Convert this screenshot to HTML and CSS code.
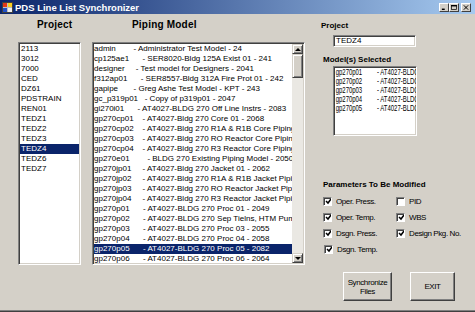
FILE: index.html
```html
<!DOCTYPE html>
<html lang="en">
<head>
    <meta charset="UTF-8">
    <title>PDS Line List Synchronizer</title>
    <link rel="stylesheet" href="styles.css">
</head>
<body>
    <div class="window">
        <header class="title-bar">
            <svg class="app-icon" width="11" height="11" viewBox="0 0 11 11">
                <rect x="0.5" y="0.5" width="10" height="10" fill="#c0c0c0" stroke="#404040"/>
                <rect x="1" y="1" width="4" height="4" fill="#e03818"/>
                <rect x="6" y="1" width="4" height="4" fill="#f8d020"/>
                <rect x="1" y="6" width="4" height="4" fill="#2050c8"/>
                <rect x="6" y="6" width="4" height="4" fill="#f0f0f0"/>
            </svg>
            <h1>PDS Line List Synchronizer</h1>
            <div class="win-btns">
                <span class="win-btn"><svg width="8" height="7" viewBox="0 0 8 7"><rect x="1" y="5" width="4" height="2" fill="#000"/></svg></span>
                <span class="win-btn"><svg width="8" height="7" viewBox="0 0 8 7"><rect x="0.5" y="0.5" width="7" height="6" fill="none" stroke="#000"/><rect x="0" y="0" width="8" height="2" fill="#000"/></svg></span>
                <span class="win-btn close"><svg width="8" height="7" viewBox="0 0 8 7"><path d="M1 0.5 L7 6.5 M7 0.5 L1 6.5" stroke="#000" stroke-width="1.4"/></svg></span>
            </div>
        </header>

        <main class="dialog">
            <section class="col col-project">
                <h2>Project</h2>
                <ul class="listbox project-list">
                    <li>2113</li>
                    <li>3012</li>
                    <li>7000</li>
                    <li>CED</li>
                    <li>DZ61</li>
                    <li>PDSTRAIN</li>
                    <li>REN01</li>
                    <li>TEDZ1</li>
                    <li>TEDZ2</li>
                    <li>TEDZ3</li>
                    <li class="selected">TEDZ4</li>
                    <li>TEDZ6</li>
                    <li>TEDZ7</li>
                </ul>
            </section>

            <section class="col col-model">
                <h2>Piping Model</h2>
                <div class="listbox model-box">
                    <ul class="rows">
                        <li>admin        - Administrator Test Model - 24</li>
                        <li>cp125ae1      - SER8020-Bldg 125A Exist 01 - 241</li>
                        <li>designer     - Test model for Designers - 2041</li>
                        <li>f312ap01      - SER8557-Bldg 312A Fire Prot 01 - 242</li>
                        <li>gapipe       - Greg Ashe Test Model - KPT - 243</li>
                        <li>gc_p319p01   - Copy of p319p01 - 2047</li>
                        <li>gi270i01      - AT4027-BLDG 270 Off Line Instrs - 2083</li>
                        <li>gp270cp01    - AT4027-Bldg 270 Core 01 - 2068</li>
                        <li>gp270cp02    - AT4027-Bldg 270 R1A &amp; R1B Core Piping - 2069</li>
                        <li>gp270cp03    - AT4027-Bldg 270 RO Reactor Core Piping - 2070</li>
                        <li>gp270cp04    - AT4027-Bldg 270 R3 Reactor Core Piping - 2071</li>
                        <li>gp270e01        - BLDG 270 Existing Piping Model - 2050</li>
                        <li>gp270jp01     - AT4027-Bldg 270 Jacket 01 - 2062</li>
                        <li>gp270jp02     - AT4027-Bldg 270 R1A &amp; R1B Jacket Piping - 2063</li>
                        <li>gp270jp03     - AT4027-Bldg 270 RO Reactor Jacket Piping - 2065</li>
                        <li>gp270jp04     - AT4027-Bldg 270 R3 Reactor Jacket Piping - 2066</li>
                        <li>gp270p01      - AT4027-BLDG 270 Proc 01 - 2049</li>
                        <li>gp270p02      - AT4027-BLDG 270 Sep Tielns, HTM Pump - 2051</li>
                        <li>gp270p03      - AT4027-BLDG 270 Proc 03 - 2055</li>
                        <li>gp270p04      - AT4027-BLDG 270 Proc 04 - 2058</li>
                        <li class="selected">gp270p05      - AT4027-BLDG 270 Proc 05 - 2082</li>
                        <li>gp270p06      - AT4027-BLDG 270 Proc 06 - 2064</li>
                    </ul>
                    <div class="scrollbar">
                        <span class="sb-btn"><i class="arrow up"></i></span>
                        <span class="sb-thumb"></span>
                        <span class="sb-track"></span>
                        <span class="sb-btn"><i class="arrow down"></i></span>
                    </div>
                </div>
            </section>

            <section class="side">
                <h3 class="side-label">Project</h3>
                <div class="textbox">TEDZ4</div>

                <h3 class="side-label models-label">Model(s) Selected</h3>
                <ul class="listbox selected-models">
                    <li><span class="nm">gp270p01</span>- AT4027-BLDG 270 Proc 01 - 2049</li>
                    <li><span class="nm">gp270p02</span>- AT4027-BLDG 270 Sep Tielns - 2051</li>
                    <li><span class="nm">gp270p03</span>- AT4027-BLDG 270 Proc 03 - 2055</li>
                    <li><span class="nm">gp270p04</span>- AT4027-BLDG 270 Proc 04 - 2058</li>
                    <li><span class="nm">gp270p05</span>- AT4027-BLDG 270 Proc 05 - 2082</li>
                </ul>

                <h3 class="side-label params-label">Parameters To Be Modified</h3>
                <div class="checks">
                    <label class="check-item"><span class="box on"></span>Oper. Press.</label>
                    <label class="check-item"><span class="box"></span>PID</label>
                    <label class="check-item"><span class="box on"></span>Oper. Temp.</label>
                    <label class="check-item"><span class="box on"></span>WBS</label>
                    <label class="check-item"><span class="box on"></span>Dsgn. Press.</label>
                    <label class="check-item"><span class="box on"></span>Design Pkg. No.</label>
                    <label class="check-item shift"><span class="box on"></span>Dsgn. Temp.</label>
                </div>

                <div class="buttons">
                    <button class="btn sync">Synchronize<br>Files</button>
                    <button class="btn exit">EXIT</button>
                </div>
            </section>
        </main>
    </div>
</body>
</html>
```

FILE: styles.css
```css
* {
  box-sizing: border-box;
}
body {
  margin: 0;
  background-color: #d4d0c8;
  font-family: "Liberation Sans", Arial, sans-serif;
  color: #000;
}
.window {
  width: 475px;
  height: 312px;
  display: flex;
  flex-direction: column;
  background-color: #d4d0c8;
  box-shadow: inset 0 -1px #404040, inset 0 -2px #808080;
  overflow: hidden;
}

/* Title bar */
.title-bar {
  height: 14px;
  flex: none;
  display: flex;
  align-items: center;
  padding: 0 4px 0 2px;
  background: linear-gradient(to right, #0a246a, #a6caf0);
}
.app-icon {
  margin-right: 2px;
}
.title-bar h1 {
  flex: 1;
  margin: 0;
  font-size: 9.5px;
  font-weight: bold;
  color: #fff;
  white-space: nowrap;
}
.win-btns {
  display: flex;
  align-items: center;
}
.win-btn {
  width: 10px;
  height: 9px;
  display: flex;
  align-items: center;
  justify-content: center;
  background-color: #d4d0c8;
  border: 1px solid;
  border-color: #fff #404040 #404040 #fff;
}
.win-btn svg {
  width: 6px;
  height: 5px;
}
.win-btn.close {
  margin-left: 2px;
}

/* Dialog body */
.dialog {
  flex: 1;
  display: flex;
  padding: 5px 0 0 18px;
}
.col {
  display: flex;
  flex-direction: column;
}
.col h2 {
  margin: 0 0 11px 0;
  height: 12px;
  font-size: 10px;
  line-height: 12px;
  font-weight: bold;
  letter-spacing: 0.2px;
  white-space: nowrap;
}
.col-project {
  width: 63px;
}
.col-project h2 {
  padding-left: 19px;
}
.col-model {
  width: 213px;
  margin-left: 11px;
}
.col-model h2 {
  padding-left: 40px;
}

/* List boxes */
.listbox {
  margin: 0;
  padding: 1px;
  list-style: none;
  background-color: #fff;
  border: 1px solid;
  border-color: #808080 #fff #fff #808080;
  box-shadow: inset 1px 1px #404040, inset -1px -1px #d4d0c8;
  overflow: hidden;
}
.project-list {
  height: 223px;
}
.project-list li,
.rows li {
  height: 10px;
  font-size: 8px;
  line-height: 10px;
  white-space: pre;
}
.project-list li {
  padding-left: 1px;
}
.selected {
  background-color: #0a246a;
  color: #fff;
}
.model-box {
  height: 223px;
  display: flex;
}
.rows {
  flex: 1;
  min-width: 0;
  margin: 0;
  padding: 0;
  list-style: none;
  overflow: hidden;
}

/* Scrollbar */
.scrollbar {
  width: 11px;
  display: flex;
  flex-direction: column;
  background-color: #eae8e3;
}
.sb-btn,
.sb-thumb {
  display: flex;
  align-items: center;
  justify-content: center;
  background-color: #d4d0c8;
  border: 1px solid;
  border-color: #d4d0c8 #404040 #404040 #d4d0c8;
  box-shadow: inset 1px 1px #fff, inset -1px -1px #808080;
}
.sb-btn {
  height: 10px;
}
.sb-thumb {
  height: 24px;
}
.sb-track {
  flex: 1;
}
.arrow {
  width: 0;
  height: 0;
  border-left: 3px solid transparent;
  border-right: 3px solid transparent;
}
.arrow.up {
  border-bottom: 3px solid #000;
}
.arrow.down {
  border-top: 3px solid #000;
}

/* Right side panel */
.side {
  width: 150px;
  margin-left: 16px;
  padding-top: 2px;
  display: flex;
  flex-direction: column;
}
.side-label {
  margin: 0;
  height: 10px;
  font-size: 8px;
  line-height: 10px;
  font-weight: bold;
  white-space: nowrap;
}
.textbox {
  width: 83px;
  height: 12px;
  margin: 4px 0 0 12px;
  padding-left: 2px;
  font-size: 8px;
  line-height: 10px;
  background-color: #fff;
  border: 1px solid;
  border-color: #808080 #fff #fff #808080;
  box-shadow: inset 1px 1px #404040, inset -1px -1px #d4d0c8;
}
.models-label {
  margin: 8px 0 0 2px;
}
.selected-models {
  width: 84px;
  height: 70px;
  margin: 1px 0 0 12px;
}
.selected-models li {
  height: 9px;
  padding-left: 1px;
  font-size: 8.5px;
  line-height: 9px;
  white-space: nowrap;
  transform: scaleX(0.7);
  transform-origin: 0 0;
}
.selected-models .nm {
  display: inline-block;
  width: 59px;
}
.params-label {
  margin: 44px 0 0 2px;
}

/* Checkboxes */
.checks {
  margin: 3px 0 0 2px;
  display: grid;
  grid-template-columns: 73px 1fr;
  grid-auto-rows: 16px;
}
.check-item {
  display: flex;
  align-items: center;
  font-size: 8px;
  letter-spacing: -0.4px;
  white-space: nowrap;
}
.check-item.shift {
  padding-left: 1px;
}
.box {
  width: 9px;
  height: 9px;
  margin-right: 4px;
  flex: none;
  background-color: #fff;
  border: 1px solid;
  border-color: #808080 #fff #fff #808080;
  box-shadow: inset 1px 1px #404040;
}
.box.on {
  background: #fff url("data:image/svg+xml,%3Csvg xmlns='http://www.w3.org/2000/svg' width='7' height='7'%3E%3Cpath d='M1 3 L3 5 L6 1' fill='none' stroke='%23000' stroke-width='1.5'/%3E%3C/svg%3E") no-repeat 1px 0;
}

/* Buttons */
.buttons {
  margin: 15px 0 0 22px;
  display: flex;
  gap: 18px;
}
.btn {
  height: 29px;
  padding: 0;
  font-family: "Liberation Sans", Arial, sans-serif;
  font-size: 8px;
  line-height: 9px;
  letter-spacing: -0.4px;
  color: #000;
  background-color: #d4d0c8;
  border: 1px solid;
  border-color: #fff #404040 #404040 #fff;
  box-shadow: inset -1px -1px #808080;
  cursor: pointer;
}
.btn.sync {
  width: 49px;
}
.btn.exit {
  width: 45px;
}
```
